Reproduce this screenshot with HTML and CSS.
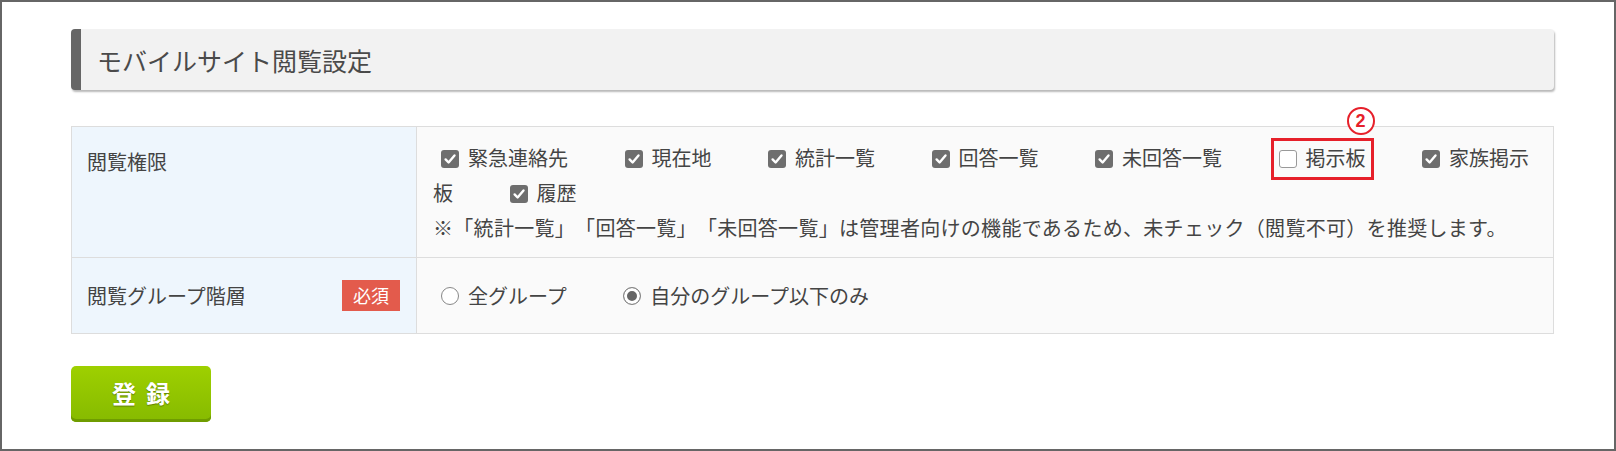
FILE: index.html
```html
<!DOCTYPE html>
<html lang="ja">
<head>
<meta charset="utf-8">
<title>モバイルサイト閲覧設定</title>
<link rel="stylesheet" href="styles.css">
</head>
<body>
<div class="frame">
  <h2 class="section-title">モバイルサイト閲覧設定</h2>
  <div class="form-grid">
    <div class="cell label-cell label-top">閲覧権限</div>
    <div class="cell value-cell perms"><label class="opt"><span class="cbox on"><svg viewBox="0 0 18 18"><path d="M4.6 9.4l3 3.1 5.9-7" /></svg></span>緊急連絡先</label><label class="opt"><span class="cbox on"><svg viewBox="0 0 18 18"><path d="M4.6 9.4l3 3.1 5.9-7" /></svg></span>現在地</label><label class="opt"><span class="cbox on"><svg viewBox="0 0 18 18"><path d="M4.6 9.4l3 3.1 5.9-7" /></svg></span>統計一覧</label><label class="opt"><span class="cbox on"><svg viewBox="0 0 18 18"><path d="M4.6 9.4l3 3.1 5.9-7" /></svg></span>回答一覧</label><label class="opt"><span class="cbox on"><svg viewBox="0 0 18 18"><path d="M4.6 9.4l3 3.1 5.9-7" /></svg></span>未回答一覧</label><label class="opt marked"><span class="cbox"></span>掲示板<span class="callout"></span><span class="callout-num">2</span></label><label class="opt"><span class="cbox on"><svg viewBox="0 0 18 18"><path d="M4.6 9.4l3 3.1 5.9-7" /></svg></span>家族掲示板</label><label class="opt"><span class="cbox on"><svg viewBox="0 0 18 18"><path d="M4.6 9.4l3 3.1 5.9-7" /></svg></span>履歴</label><div class="note">※「統計一覧」「回答一覧」「未回答一覧」は管理者向けの機能であるため、未チェック（閲覧不可）を推奨します。</div></div>
    <div class="cell label-cell label-mid"><span>閲覧グループ階層</span><span class="badge">必須</span></div>
    <div class="cell value-cell radios">
      <label class="ropt"><span class="radio"></span>全グループ</label>
      <label class="ropt"><span class="radio on"></span>自分のグループ以下のみ</label>
    </div>
  </div>
  <button class="submit" type="button">登録</button>
</div>
</body>
</html>
```
FILE: styles.css
```css
html, body {
  margin: 0;
  padding: 0;
  background: #fff;
}

body {
  font-family: "Noto Sans CJK JP", "Noto Sans", sans-serif;
  color: #444;
  text-spacing-trim: space-all;
}

.frame {
  box-sizing: border-box;
  width: 1616px;
  height: 451px;
  border: 2px solid #666;
  padding: 27px 60px 0 69px;
}

.section-title {
  box-sizing: border-box;
  height: 61px;
  margin: 0 0 36px;
  padding-left: 16px;
  display: flex;
  align-items: center;
  background: #f2f2f2;
  border-left: 10px solid #666;
  border-radius: 4px;
  box-shadow: 1px 2px 2px rgba(0, 0, 0, 0.28);
  font-size: 25px;
  font-weight: normal;
  color: #4a4a4a;
}

.form-grid {
  display: grid;
  grid-template-columns: 345px 1fr;
  grid-template-rows: auto 75px;
  border: 1px solid #ddd;
  font-size: 20px;
}

.cell {
  box-sizing: border-box;
}

.label-cell {
  background: #eef6fd;
  border-right: 1px solid #ddd;
}

.label-top {
  padding: 20px 16px 0 15px;
  line-height: 30px;
  border-bottom: 1px solid #ddd;
}

.label-mid {
  display: flex;
  align-items: center;
  justify-content: space-between;
  padding: 0 16px 0 15px;
}

.badge {
  display: inline-block;
  height: 31px;
  line-height: 31px;
  padding: 0 11px;
  background: #e35b4c;
  color: #fff;
  font-size: 18px;
}

.value-cell {
  background: #fafafa;
}

.perms {
  padding: 13px 17px 12px 16px;
  line-height: 35px;
  border-bottom: 1px solid #ddd;
}

.opt {
  padding-left: 8px;
  margin-right: 48.5px;
}

.cbox {
  display: inline-block;
  box-sizing: border-box;
  width: 18px;
  height: 18px;
  margin-right: 9px;
  vertical-align: -2px;
  border-radius: 3px;
  background: #fff;
  border: 1px solid #999;
}

.cbox.on {
  background: #6e6e6e;
  border: none;
}

.cbox svg {
  display: block;
  width: 18px;
  height: 18px;
}

.cbox svg path {
  fill: none;
  stroke: #fff;
  stroke-width: 2.4;
  stroke-linecap: round;
  stroke-linejoin: round;
}

.marked {
  position: relative;
}

.callout {
  position: absolute;
  left: 0;
  right: -8px;
  top: 50%;
  height: 42px;
  margin-top: -20px;
  box-sizing: border-box;
  border: 3px solid #e6202a;
  pointer-events: none;
}

.callout-num {
  position: absolute;
  left: 76px;
  top: -36px;
  box-sizing: border-box;
  width: 28px;
  height: 28px;
  border: 2px solid #e6202a;
  border-radius: 50%;
  background: #fff;
  color: #e6202a;
  font-family: "Liberation Sans", "Noto Sans", sans-serif;
  font-weight: bold;
  font-size: 18px;
  line-height: 24px;
  text-align: center;
}

.note {
  display: block;
  letter-spacing: 0.3px;
}

.radios {
  display: flex;
  align-items: center;
  padding: 0 17px 0 16px;
}

.ropt {
  display: flex;
  align-items: center;
  padding-left: 8px;
  margin-right: 48.5px;
}

.radio {
  box-sizing: border-box;
  width: 18px;
  height: 18px;
  margin-right: 9px;
  border: 1px solid #888;
  border-radius: 50%;
  background: #fff;
}

.radio.on {
  background: #666;
  box-shadow: inset 0 0 0 3px #fff;
}

.submit {
  display: block;
  width: 140px;
  height: 56px;
  margin-top: 32px;
  padding: 0 0 3px 10px;
  border: none;
  border-radius: 5px;
  background: linear-gradient(#9ed000, #86ba00);
  box-shadow: inset 0 -3px 0 #6f9c00;
  color: #fff;
  font-family: "Noto Sans CJK JP", sans-serif;
  font-size: 24px;
  font-weight: bold;
  letter-spacing: 10px;
  text-shadow: 0 1px 1px rgba(0, 0, 0, 0.35);
}
```
